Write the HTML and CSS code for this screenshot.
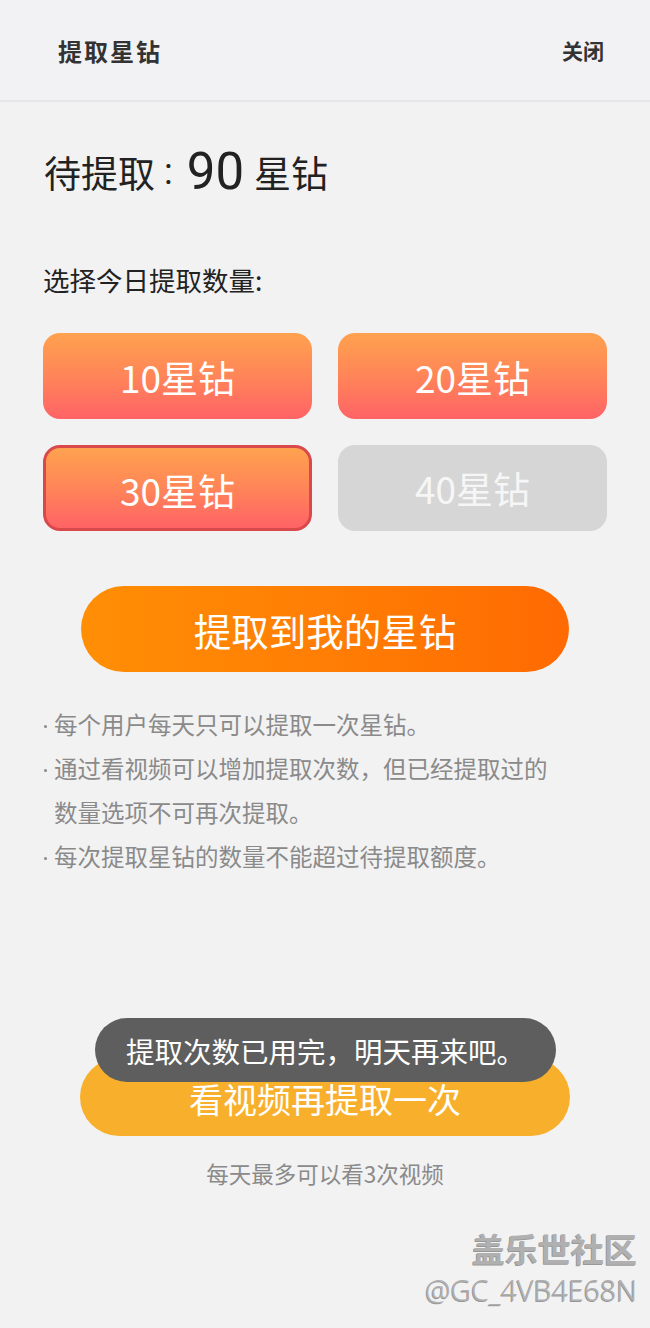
FILE: index.html
```html
<!DOCTYPE html>
<html lang="zh-CN">
<head>
<meta charset="utf-8">
<title>提取星钻</title>
<link rel="stylesheet" href="styles.css">
</head>
<body>
<div class="page">
  <header class="header">
    <div class="title">提取星钻</div>
    <div class="close">关闭</div>
  </header>
  <main class="content">
    <div class="pending"><span>待提取</span><span class="colon">:</span><span class="num">90</span><span>星钻</span></div>
    <div class="label">选择今日提取数量:</div>
    <div class="options">
      <div class="opt">10星钻</div>
      <div class="opt">20星钻</div>
      <div class="opt selected">30星钻</div>
      <div class="opt disabled">40星钻</div>
    </div>
    <div class="main-btn">提取到我的星钻</div>
    <ul class="notes">
      <li>每个用户每天只可以提取一次星钻。</li>
      <li>通过看视频可以增加提取次数，但已经提取过的数量选项不可再次提取。</li>
      <li>每次提取星钻的数量不能超过待提取额度。</li>
    </ul>
    <div class="video-area">
      <div class="video-btn">看视频再提取一次</div>
      <div class="toast">提取次数已用完，明天再来吧。</div>
    </div>
    <div class="hint">每天最多可以看3次视频</div>
  </main>
  <div class="watermark">
    <div class="wm1">盖乐世社区</div>
    <div class="wm2">@GC_4VB4E68N</div>
  </div>
</div>
</body>
</html>
```
FILE: styles.css
```css
* { box-sizing: border-box; margin: 0; padding: 0; }
html, body { width: 650px; height: 1328px; background: #f2f2f3; }
body { font-family: "Noto Sans CJK SC", "Noto Sans", sans-serif; color: #222; }
.page { position: relative; width: 650px; height: 1328px; overflow: hidden; }

.header {
  height: 102px;
  border-bottom: 2px solid #e6e6e8;
  display: flex;
  align-items: center;
  justify-content: space-between;
  padding: 0 46px 0 58px;
  background: #f2f2f4;
}
.title { font-size: 24px; font-weight: 700; color: #333; letter-spacing: 2px; }
.close { font-size: 21px; font-weight: 700; color: #333; }

.content { padding: 0 43px; display: flex; flex-direction: column; }

.pending {
  margin-top: 40px;
  height: 60px;
  display: flex;
  align-items: center;
  font-size: 37px;
  color: #222;
  line-height: 1;
  padding-left: 1px;
}
.pending .colon { margin: 0 14px 0 9px; font-family: "Roboto", sans-serif; font-size: 36px; }
.pending .num { font-family: "Roboto", sans-serif; font-size: 51px; margin-right: 10px; margin-top: -2px; }

.label { margin-top: 61px; font-size: 26.5px; line-height: 34px; color: #222; }

.options {
  margin-top: 36px;
  display: grid;
  grid-template-columns: 269px 269px;
  column-gap: 26px;
  row-gap: 26px;
}
.opt {
  height: 86px;
  border-radius: 17px;
  background: linear-gradient(180deg, #ffa24f 0%, #ff8558 50%, #ff6366 100%);
  color: #fff;
  font-size: 37px;
  display: flex;
  align-items: center;
  justify-content: center;
  padding-top: 2px;
}
.opt.selected { border: 3px solid #d9484a; padding-top: 4px; }
.opt.disabled { background: #d6d6d6; color: #f6f6f6; padding-top: 0; }

.main-btn {
  margin: 55px 38px 0 38px;
  height: 86px;
  border-radius: 43px;
  background: linear-gradient(90deg, #ff8e05 0%, #ff7e04 50%, #ff6a02 100%);
  color: #fff;
  font-size: 37.5px;
  display: flex;
  align-items: center;
  justify-content: center;
}

.notes {
  list-style: none;
  margin-top: 30px;
  color: #8a8a8a;
  font-size: 23.5px;
  line-height: 44px;
  width: 510px;
}
.notes li { position: relative; padding-left: 11px; }
.notes li::before {
  content: "";
  position: absolute;
  left: 1px;
  top: 23px;
  width: 3px;
  height: 3px;
  border-radius: 50%;
  background: #8a8a8a;
}

.video-area {
  position: relative;
  margin: 180px 37px 0 37px;
  height: 78px;
}
.video-btn {
  height: 78px;
  border-radius: 39px;
  background: #f8b02c;
  color: #fff;
  font-size: 34px;
  display: flex;
  align-items: center;
  justify-content: center;
  padding-top: 2px;
}
.toast {
  position: absolute;
  left: 15px;
  top: -40px;
  width: 461px;
  height: 64px;
  border-radius: 32px;
  background: #5e5e5e;
  color: #fff;
  font-size: 28.5px;
  display: flex;
  align-items: center;
  justify-content: center;
}

.hint {
  margin-top: 22px;
  text-align: center;
  color: #8a8a8a;
  font-size: 22.5px;
  line-height: 30px;
}

.watermark {
  position: absolute;
  right: 13px;
  top: 1226px;
  text-align: right;
  color: #b0b0b0;
  text-shadow: -1px 1px 0 rgba(90,90,90,0.6);
}
.wm1 { font-size: 33px; font-weight: 700; line-height: 44px; }
.wm2 { font-size: 28.5px; line-height: 40px; font-family: "Noto Sans", sans-serif; font-weight: 300; }
```
